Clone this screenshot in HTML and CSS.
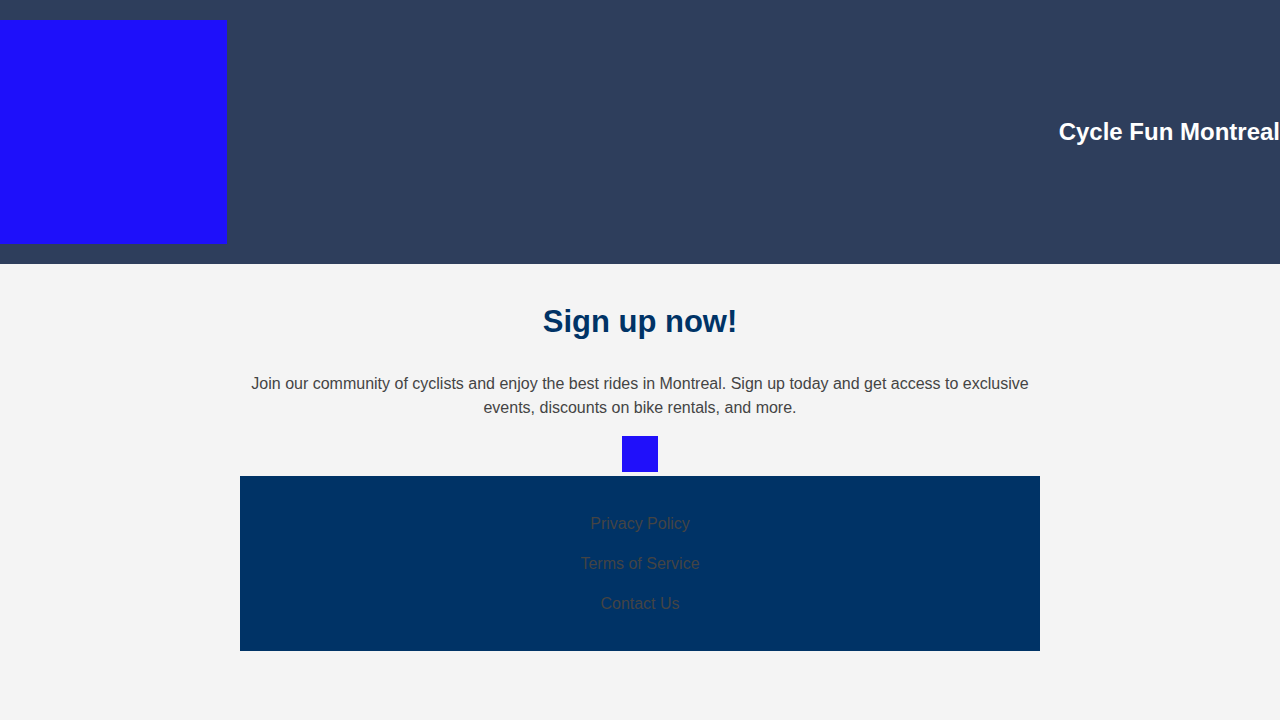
FILE: index.html
```html
<!DOCTYPE html>
<html lang="en">
<head>
<meta charset="utf-8">
<title>Cycle Fun Montreal</title>
<link rel="stylesheet" href="styles.css">
</head>
<body>
<header class="site-header">
  <div class="logo" aria-label="Cycle Fun Montreal logo"></div>
  <h2 class="site-title">Cycle Fun Montreal</h2>
</header>
<main class="content">
  <h1 class="headline">Sign up now!</h1>
  <p class="intro">Join our community of cyclists and enjoy the best rides in Montreal. Sign up today and get access to exclusive events, discounts on bike rentals, and more.</p>
  <div class="cta-wrap"><div class="cta-box"></div></div>
  <footer class="site-footer">
    <ul class="footer-links">
      <li><a href="#">Privacy Policy</a></li>
      <li><a href="#">Terms of Service</a></li>
      <li><a href="#">Contact Us</a></li>
    </ul>
  </footer>
</main>
</body>
</html>
```
FILE: styles.css
```css
* { box-sizing: border-box; }
html, body { margin: 0; padding: 0; }
body {
  background: #f4f4f4;
  font-family: "Liberation Sans", Arial, Helvetica, sans-serif;
  color: #444;
}
.site-header {
  background: #2e3e5c;
  height: 264px;
  display: flex;
  align-items: center;
  justify-content: space-between;
}
.logo {
  width: 227px;
  height: 224px;
  background: #1e10fa;
}
.site-title {
  margin: 0;
  color: #fff;
  font-size: 24px;
  font-weight: bold;
  line-height: 28px;
}
.content {
  width: 800px;
  margin: 0 auto;
  text-align: center;
}
.headline {
  margin: 40px 0 0;
  font-size: 31px;
  line-height: 36px;
  color: #003366;
}
.intro {
  margin: 32px 0 16px;
  font-size: 16px;
  line-height: 24px;
  color: #444;
}
.cta-wrap {
  display: flex;
  justify-content: center;
  margin-bottom: 4px;
}
.cta-box {
  width: 36px;
  height: 36px;
  background: #2010fa;
}
.site-footer {
  background: #003366;
  padding: 36px 0 35px;
}
.footer-links {
  list-style: none;
  margin: 0;
  padding: 0;
  display: flex;
  flex-direction: column;
  gap: 16px;
}
.footer-links li { line-height: 24px; font-size: 16px; }
.footer-links a {
  color: #444;
  text-decoration: none;
}
```
